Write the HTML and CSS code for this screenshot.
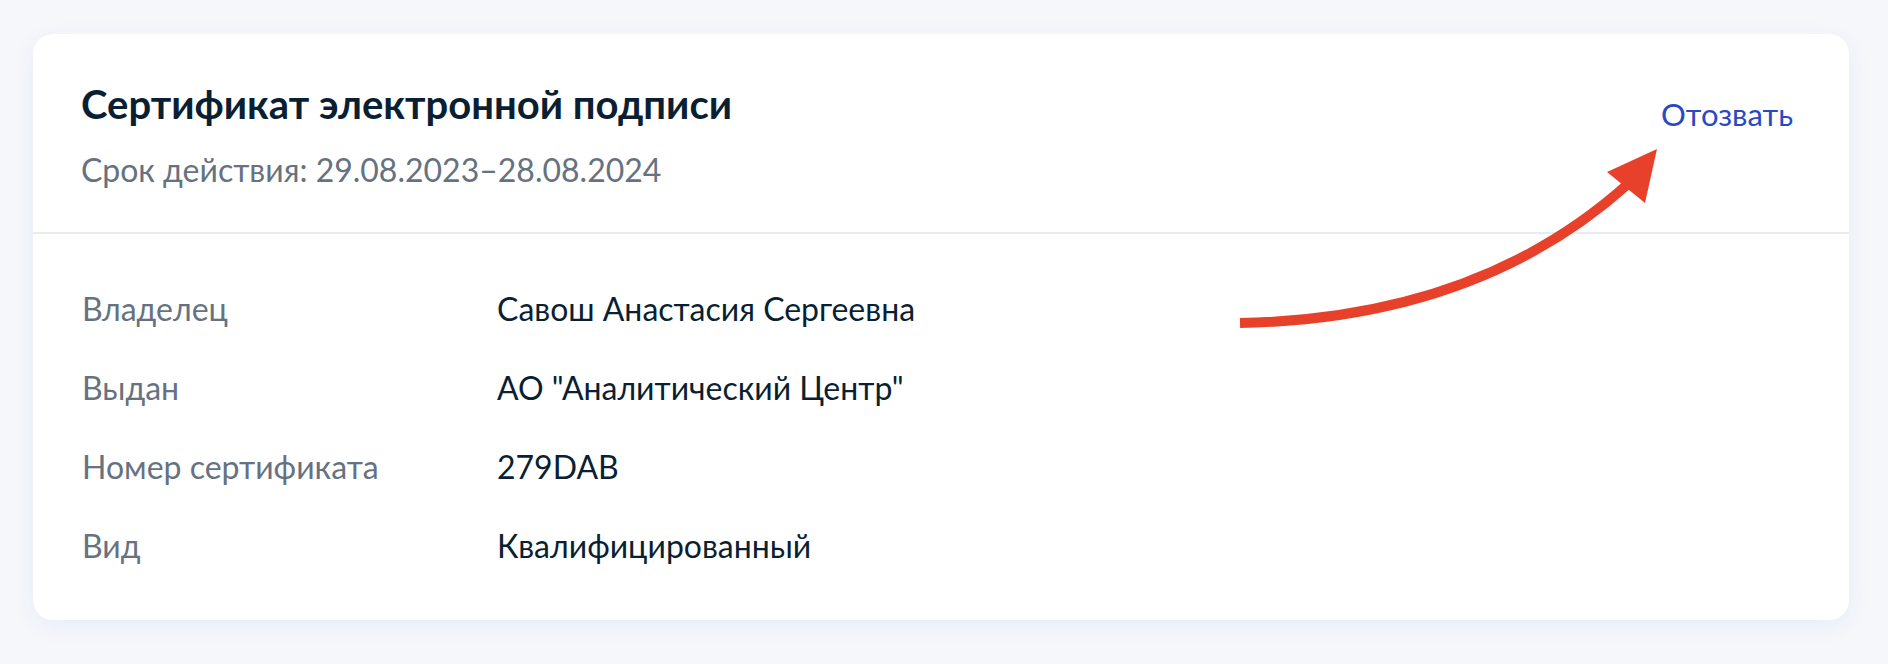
FILE: index.html
```html
<!DOCTYPE html>
<html lang="ru">
<head>
  <title>Сертификат электронной подписи</title>
  <meta charset="UTF-8">
  <meta name="viewport" content="width=device-width, initial-scale=1">
  <link rel="stylesheet" href="styles.css">
</head>
<body>
  <div class="card">
    <div class="card-head">
      <div class="head-text">
        <h2>Сертификат электронной подписи</h2>
        <p class="period">Срок действия: 29.08.2023–28.08.2024</p>
      </div>
      <a class="revoke" href="#">Отозвать</a>
    </div>
    <div class="card-body">
      <div class="row">
        <span class="label">Владелец</span>
        <span class="value">Савош Анастасия Сергеевна</span>
      </div>
      <div class="row">
        <span class="label">Выдан</span>
        <span class="value">АО "Аналитический Центр"</span>
      </div>
      <div class="row">
        <span class="label">Номер сертификата</span>
        <span class="value">279DAB</span>
      </div>
      <div class="row">
        <span class="label">Вид</span>
        <span class="value">Квалифицированный</span>
      </div>
    </div>

    <!-- annotation arrow pointing to the link -->
    <svg class="pointer" width="1888" height="664" viewBox="0 0 1888 664">
      <path d="M1240 323 C1400 320 1530 272 1628 184" fill="none" stroke="#e8412b" stroke-width="10"/>
      <polygon points="1657,149 1607,172 1645,203" fill="#e8412b"/>
    </svg>
  </div>
</body>
</html>
```

FILE: styles.css
```css
body {
  font-family: Lato, 'Noto Sans', sans-serif;
  background: #f5f7fb;
  margin: 0;
  padding: 34px 39px 44px 33px;
}
.card {
  background: #fff;
  border-radius: 20px;
  box-shadow: 0 6px 24px rgba(30, 60, 160, 0.06);
}
.card-head {
  display: flex;
  justify-content: space-between;
  align-items: flex-start;
  height: 200px;
  box-sizing: border-box;
  padding: 46px 56px 0 48px;
  border-bottom: 2px solid #e9ebf3;
}
h2 {
  margin: 0;
  font-size: 40px;
  line-height: 48px;
  font-weight: 700;
  color: #0b1f33;
}
.period {
  margin: 22px 0 0;
  font-size: 32px;
  line-height: 40px;
  color: #66727f;
}
.revoke {
  margin-top: 14px;
  font-size: 31px;
  line-height: 40px;
  color: #2a48c4;
  text-decoration: none;
}
.card-body {
  display: flex;
  flex-direction: column;
  gap: 39px;
  padding: 55px 49px 54px;
}
.row {
  display: flex;
  font-size: 32px;
  line-height: 40px;
}
.label {
  width: 415px;
  color: #66727f;
}
.value {
  color: #0b1f33;
}
.pointer {
  position: absolute;
  left: 0;
  top: 0;
  pointer-events: none;
}
```
